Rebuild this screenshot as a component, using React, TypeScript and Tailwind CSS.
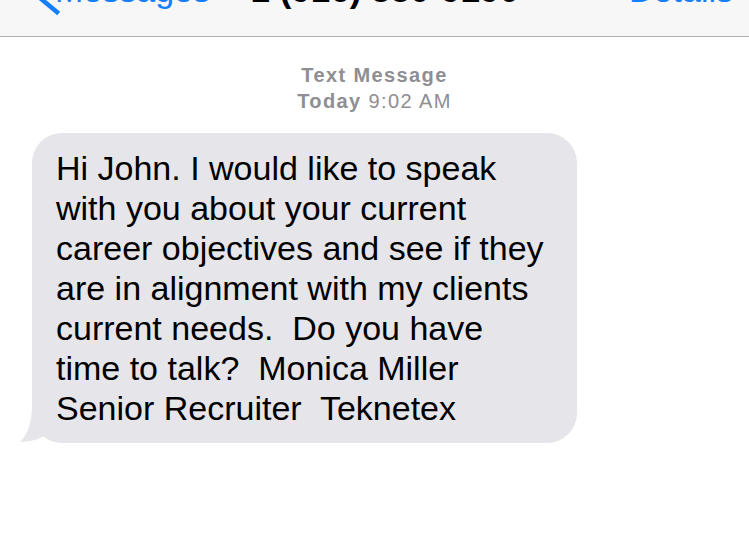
import React from "react";

export default function App() {
  const font = { fontFamily: '"Liberation Sans", Arial, sans-serif' };
  return (
    <div className="w-[749px] h-[550px] bg-white overflow-hidden" style={font}>
      {/* Nav bar (clipped at top) */}
      <div className="h-[37px] bg-[#f7f7f7] border-b border-[#b2b2b2] overflow-hidden grid grid-cols-[1fr_auto_1fr] items-start">
        <div className="flex items-start">
          <svg width="44" height="36" viewBox="0 0 44 36" className="ml-[18px] mt-0 shrink-0">
            <polyline points="40,-16 22,-2 39,12" fill="none" stroke="#157efb" strokeWidth="4.5" strokeLinecap="square" />
          </svg>
          <span className="text-[34px] leading-[34px] mt-[-27px] ml-[-7px] text-[#157efb] whitespace-nowrap">Messages</span>
        </div>
        <span className="text-[35px] leading-[34px] mt-[-27px] font-bold text-black whitespace-nowrap">+1 (916) 880-9190</span>
        <div className="flex justify-end pr-[16px]">
          <span className="text-[34px] leading-[34px] mt-[-27px] text-[#157efb] whitespace-nowrap">Details</span>
        </div>
      </div>

      {/* Timestamp */}
      <div className="pt-[25px] flex flex-col items-center text-[20px] leading-[26px] text-[#8e8e93] tracking-[1.4px]">
        <span className="font-bold">Text Message</span>
        <span>
          <span className="font-bold">Today</span> 9:02 AM
        </span>
      </div>

      {/* Bubble */}
      <div className="mt-[19px] ml-[32px] relative w-[545px]">
        <div className="relative z-10 bg-[#e5e5ea] rounded-[30px] pl-[24px] pr-[20px] pt-[15px] pb-[15px] text-[34px] leading-[40px] text-black whitespace-nowrap">
          Hi John. I would like to speak<br />
          with you about your current<br />
          career objectives and see if they<br />
          are in alignment with my clients<br />
          current needs.&nbsp; Do you have<br />
          time to talk?&nbsp; Monica Miller<br />
          Senior Recruiter&nbsp; Teknetex
        </div>
        <svg width="40" height="40" viewBox="0 0 40 40" className="absolute left-[-14px] bottom-[-1px] z-0">
          <path d="M14 0 C14 18 10 30 2 38 C12 38 22 35 30 30 L30 0 Z" fill="#e5e5ea" />
        </svg>
      </div>
    </div>
  );
}
